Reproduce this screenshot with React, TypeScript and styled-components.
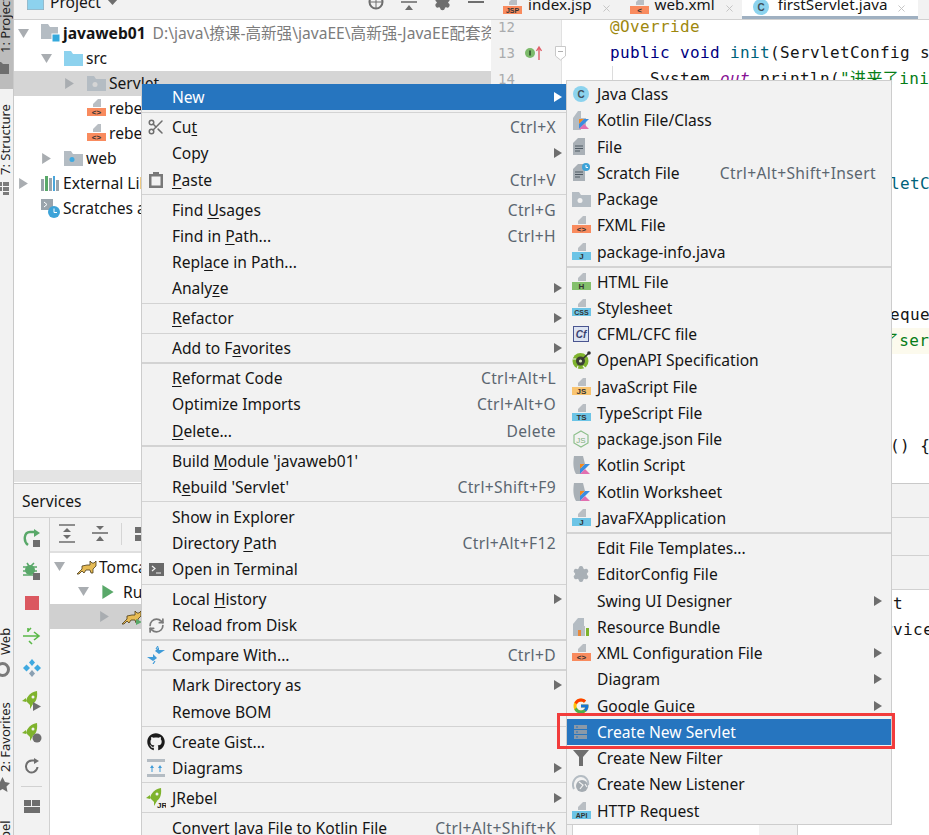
import React from "react";
import styled, { createGlobalStyle } from "styled-components";
import { Scissors, RefreshCw, Settings, X } from "lucide-react";
import { FaGithub } from "react-icons/fa";
import { FcGoogle } from "react-icons/fc";

const UI = `"Noto Sans", "Noto Sans CJK SC", sans-serif`;
const MONO = `"DejaVu Sans Mono", "Noto Sans CJK SC", monospace`;

const Global = createGlobalStyle`
  html, body { margin: 0; padding: 0; width: 929px; height: 835px; overflow: hidden; background: #f2f2f2; }
  #root { width: 929px; height: 835px; }
  * { box-sizing: border-box; }
  u { text-underline-offset: 2px; }
`;

const Window = styled.div`
  position: relative; display: flex; width: 929px; height: 835px; overflow: hidden;
  font: 15.6px/20px ${UI}; color: #151515; background: #f2f2f2;
`;

/* ---------- left tool stripe ---------- */
const Stripe = styled.aside`
  flex: 0 0 14px; height: 835px; overflow: hidden; display: flex; flex-direction: column;
  border-right: 1px solid #c9c9c9; background: #f2f2f2;
`;
const StripeGroup = styled.div<{ $top?: number; $h?: number; $on?: boolean }>`
  display: flex; flex-direction: column; flex: none; margin-top: ${p => p.$top ?? 0}px;
  height: ${p => (p.$h ? `${p.$h}px` : "auto")}; background: ${p => (p.$on ? "#bcbcbc" : "transparent")};
`;
const StripeText = styled.div<{ $h: number }>`
  writing-mode: vertical-rl; transform: rotate(180deg); height: ${p => p.$h}px; width: 13px; overflow: hidden;
  white-space: nowrap; font-size: 13px; line-height: 10px; display: flex; align-items: flex-start; color: #222;
  padding-left: 4px;
`;
const StripeIcon = styled.svg<{ $top: number }>`
  display: block; margin-top: ${p => p.$top}px; margin-left: -5px; flex: none;
`;

/* ---------- main ---------- */
const Main = styled.div`
  flex: 1; min-width: 0; display: flex; flex-direction: column;
`;
const TopRow = styled.div`
  flex: 0 0 484px; display: flex; border-bottom: 1px solid #c9c9c9; min-height: 0;
`;
const ProjectPanel = styled.section`
  flex: 0 0 477px; min-width: 0; overflow: hidden; display: flex; flex-direction: column; background: #fff;
`;
const PanelHeader = styled.header`
  flex: 0 0 20px; overflow: hidden; background: #f2f2f2; border-bottom: 1px solid #d1d1d1;
`;
const PanelHeaderInner = styled.div`
  height: 28px; margin-top: -12px; display: flex; align-items: center; padding: 0 7px 0 13px; gap: 6px;
`;
const HeaderSpacer = styled.div` flex: 1; `;
const HeaderTools = styled.div` display: flex; align-items: center; gap: 17px; `;
const Tree = styled.div`
  flex: 1; padding-top: 0.5px; overflow: hidden; min-height: 0;
`;
const Row = styled.div<{ $indent: number; $selected?: boolean; $selColor?: string }>`
  height: 25px; display: flex; align-items: center; white-space: nowrap; overflow: hidden;
  padding-left: ${p => p.$indent}px;
  background: ${p => (p.$selected ? p.$selColor ?? "#d5d5d5" : "transparent")};
`;
const ArrowSlot = styled.span`
  flex: 0 0 23px; display: flex; align-items: center;
`;
const IconSlot = styled.span`
  flex: 0 0 22px; display: flex; align-items: center;
`;
const Bold = styled.b` font-weight: 700; margin-right: 7px; `;
const Muted = styled.span` color: #7c7c7c; `;
const HScroll = styled.div`
  flex: 0 0 13px; background: #e4e4e4; border-bottom: 1px solid #fff;
`;

/* editor */
const Editor = styled.section`
  flex: 1; min-width: 0; display: flex; flex-direction: column; background: #fff;
`;
const TabBar = styled.nav`
  flex: 0 0 20px; display: flex; overflow: hidden; background: #f2f2f2; border-bottom: 1px solid #d1d1d1;
  padding-left: 1px; font-size: 15.2px;
`;
const Tab = styled.div<{ $active?: boolean }>`
  height: 19px; display: flex; align-items: flex-end; flex: none; white-space: nowrap;
  padding: 0 ${p => (p.$active ? "11px" : "7px")} ${p => (p.$active ? "2px" : "5px")} 11px;
  background: ${p => (p.$active ? "#fff" : "transparent")};
  border-bottom: ${p => (p.$active ? "3px solid #9fb0c1" : "0")};
`;
const TabIconSlot = styled.span`
  flex: 0 0 25px; align-self: flex-end; display: flex; margin-bottom: -1px;
`;
const TabLabel = styled.span` margin-right: 9px; `;
const EditorBody = styled.div`
  flex: 1; display: flex; min-height: 0; overflow: hidden; position: relative;
`;
const Gutter = styled.div`
  flex: 0 0 71px; background: #f2f2f2; border-right: 1px solid #e1e1e1;
  font: 14px/26.2px ${MONO}; color: #a9abad;
`;
const LineList = styled.div` margin-top: -6px; `;
const GutterLine = styled.div`
  height: 26.2px; display: flex; align-items: center; padding-left: 7px;
`;
const LineNo = styled.span` flex: 0 0 27px; `;
const FoldMark = styled.svg` margin-left: auto; margin-right: -5px; position: relative; z-index: 1; `;
const Code = styled.div`
  flex: 1; min-width: 0; font: 16px/26.2px ${MONO}; letter-spacing: 0.37px; color: #151515;
  white-space: pre; overflow: hidden;
`;
const CodeLine = styled.div<{ $pad?: number; $hl?: boolean; $guide?: boolean }>`
  height: 26.2px; padding-left: ${p => 48 + (p.$pad ?? 0)}px;
  background: ${p => (p.$hl ? "#fcfaed" : "transparent")};
  ${p => (p.$guide ? "background: linear-gradient(#dcdcdc,#dcdcdc) no-repeat 50px 0/1px 100%;" : "")}
`;
const Kw = styled.span` color: #000080; `;
const Fn = styled.span` color: #00627a; `;
const Ann = styled.span` color: #9e880d; `;
const Str = styled.span` color: #067d17; `;
const Fld = styled.span` color: #871094; font-style: italic; `;

/* services */
const Services = styled.section`
  flex: 1; min-height: 0; display: flex; flex-direction: column; background: #f2f2f2;
`;
const ServicesHeader = styled.header`
  flex: 0 0 34px; display: flex; align-items: center; padding: 0 0 0 8px; border-bottom: 1px solid #d1d1d1;
`;
const ServicesBody = styled.div` flex: 1; display: flex; min-height: 0; `;
const VToolbar = styled.div`
  flex: 0 0 36px; border-right: 1px solid #d1d1d1; padding-top: 3.75px; display: flex; flex-direction: column;
`;
const VBtn = styled.div`
  height: 32.5px; flex: none; display: flex; align-items: center; justify-content: center;
`;
const VSep = styled.div`
  height: 8.5px; flex: none; padding-top: 3.75px;
  &::after { content: ""; display: block; height: 1px; margin: 0 7px; background: #d1d1d1; }
`;
const TreeCol = styled.div`
  flex: 0 0 517px; min-width: 0; display: flex; flex-direction: column; background: #fff;
`;
const HToolbar = styled.div`
  flex: 0 0 35px; display: flex; align-items: center; background: #f2f2f2; border-bottom: 2px solid #dfdfdf;
  padding: 0 0 2px 9px; gap: 17px;
`;
const ToolSep = styled.span`
  flex: none; width: 1px; height: 22px; background: #d5d5d5; margin: 0 -4px;
`;
const ServiceTree = styled.div` flex: 1; padding-top: 1px; overflow: hidden; `;
const Splitter = styled.div` flex: 0 0 5px; background: #f2f2f2; `;
const RightCol = styled.div`
  flex: 1; min-width: 0; display: flex; flex-direction: column; border-left: 1px solid #d1d1d1;
`;
const RightBar = styled.div<{ $h: number }>`
  flex: 0 0 ${p => p.$h}px; background: #f2f2f2; border-bottom: 1px solid #d1d1d1;
`;
const ConsoleRow = styled.div` flex: 1; display: flex; min-height: 0; `;
const ConsoleLeft = styled.div` flex: 0 0 186px; background: #fff; `;
const ConsoleGutter = styled.div` flex: 0 0 39px; background: #f2f2f2; border-right: 1px solid #d1d1d1; `;
const ConsoleOut = styled.div`
  flex: 1; background: #fff; padding: 0.5px 0 0 16px; font: 16px/26.2px ${MONO}; letter-spacing: 0.37px;
  white-space: nowrap; overflow: hidden;
`;

/* menus */
const Menu = styled.div<{ $left: number; $top: number; $width: number; $z: number }>`
  position: absolute; left: ${p => p.$left}px; top: ${p => p.$top}px; width: ${p => p.$width}px; z-index: ${p => p.$z};
  background: #f2f2f2; border: 1px solid #cdcdcd; border-width: ${p => (p.$z === 2 ? "1px" : "0 1px")};
`;
const MenuRow = styled.div<{ $active?: boolean; $sub?: boolean }>`
  height: ${p => (p.$sub ? "26.25px" : "26.2px")}; display: flex; align-items: center; padding-left: 30px;
  position: relative; white-space: nowrap;
  background: ${p => (p.$active ? "#2675bf" : "transparent")};
  color: ${p => (p.$active ? "#fff" : "#151515")};
`;
const MenuIcon = styled.span`
  position: absolute; left: 4px; top: 50%; transform: translateY(-50%); width: 20px; height: 20px;
  display: flex; align-items: center; justify-content: center;
`;
const Shortcut = styled.span<{ $sub?: boolean }>`
  margin-left: auto; margin-right: ${p => (p.$sub ? "15px" : "10px")}; color: #5b6670; letter-spacing: 0.35px;
`;
const SubArrow = styled.svg<{ $sub?: boolean }>`
  margin-left: auto; margin-right: ${p => (p.$sub ? "9px" : "4px")};
`;
const Sep = styled.div<{ $thick?: boolean }>`
  height: 3.85px; display: flex; align-items: center;
  &::after { content: ""; flex: 1; height: ${p => (p.$thick ? "2px" : "1px")}; background: #d3d3d3; }
`;
const Callout = styled.div`
  position: absolute; left: 557px; top: 713px; width: 338px; height: 36px; border: 3px solid #f23c3c; z-index: 3;
  pointer-events: none;
`;

/* ---------- icons ---------- */
const Tri = ({ dir = "r", c = "#a9adb1", s = 11 }: { dir?: "r" | "d"; c?: string; s?: number }) => (
  <svg width={s} height={s} viewBox="0 0 10 10">
    <path d={dir === "r" ? "M1 0 L9 5 L1 10Z" : "M0 1 H10 L5 9Z"} fill={c} />
  </svg>
);
const Folder = ({ c = "#8dd2ee", dot }: { c?: string; dot?: string }) => (
  <svg width="19" height="15" viewBox="0 0 19 15">
    <path d="M0 0 H7 L9 3 H19 V15 H0Z" fill={c} />
    {dot && <circle cx="8" cy="8.5" r="2.5" fill={dot} />}
  </svg>
);
const ModuleIcon = () => (
  <svg width="20" height="18" viewBox="0 0 20 18">
    <path d="M0 0 H7 L9 3 H17 V15 H0Z" fill="#b4bcc3" />
    <rect x="11" y="10" width="8" height="8" fill="#35a9dc" stroke="#fff" />
  </svg>
);
const FileBand = ({ band, label, tc = "#333" }: { band: string; label: string; tc?: string }) => (
  <svg width="19" height="18" viewBox="0 0 19 18">
    <path d="M6 5 L11 0 H14 V8 H6Z" fill="#b9bec3" />
    <rect x="0" y="9" width="19" height="8" fill={band} />
    <text x="9.5" y="15.8" fontSize={label.length > 2 ? 7 : 8} fontWeight="700" textAnchor="middle" fontFamily='"Liberation Sans", sans-serif' fill={tc}>{label}</text>
  </svg>
);
const Kt = ({ x = 7, y = 7 }: { x?: number; y?: number }) => (
  <g transform={`translate(${x} ${y})`}>
    <path d="M0 0 H5 L0 5Z" fill="#f58a1f" />
    <path d="M5 0 H10 L0 10 V5Z" fill="#3b8de0" />
    <path d="M0 10 L5 5 L10 10Z" fill="#e26fb0" />
  </g>
);
const KotlinFile = () => (
  <svg width="18" height="20" viewBox="0 0 18 20">
    <path d="M1 8 L6 1 H9 V8 H14 V9 H9 V20 H1Z" fill="#b4bcc3" />
    <path d="M6 9 H14 V19 H6Z" fill="#b4bcc3" />
    <Kt x={7} y={9} />
  </svg>
);
const KotlinScript = () => (
  <svg width="18" height="20" viewBox="0 0 18 20">
    <path d="M2 1 H11 L13 9 H9 V19 H4 C1 14 1 7 2 1Z" fill="#a9b0b6" />
    <Kt x={8} y={9} />
  </svg>
);
const DocLines = ({ clock }: { clock?: boolean }) => (
  <svg width="18" height="19" viewBox="0 0 18 19">
    <path d="M1 6 L6 1 H13 V18 H1Z" fill="#a9b0b6" />
    <path d="M3 9 H11 M3 11.5 H11 M3 14 H8" stroke="#4f5a63" strokeWidth="1" />
    {clock && <><circle cx="14" cy="4" r="4" fill="#3da3d8" /><path d="M14 2 V4.5 H16" stroke="#fff" fill="none" /></>}
  </svg>
);
const JavaC = ({ s = 16 }: { s?: number }) => (
  <svg width={s} height={s} viewBox="0 0 16 16">
    <circle cx="8" cy="8" r="8" fill="#8cd3ee" />
    <text x="8" y="11.5" fontSize="10" fontWeight="700" textAnchor="middle" fontFamily='"Liberation Sans", sans-serif' fill="#3f4f5a">C</text>
  </svg>
);
const Cfml = () => (
  <svg width="16" height="16" viewBox="0 0 16 16">
    <rect x="0.5" y="0.5" width="15" height="15" fill="#dde4f2" stroke="#4a5590" />
    <text x="8" y="12" fontSize="10" fontWeight="700" fontStyle="italic" textAnchor="middle" fontFamily='"Liberation Sans", sans-serif' fill="#3a4270">Cf</text>
  </svg>
);
const OpenApi = () => (
  <svg width="19" height="19" viewBox="0 0 19 19">
    <circle cx="8.5" cy="10" r="8" fill="#7fb32d" />
    <circle cx="8.5" cy="10" r="4.5" fill="#3c3f35" />
    <path d="M8.5 10 L17 2" stroke="#333" strokeWidth="1.5" />
    <circle cx="17" cy="2" r="1.8" fill="#333" />
    <circle cx="8.5" cy="10" r="1.6" fill="#d9e8b8" />
    <path d="M1 8 H4 M6 15 L5 18 M11 15 L13 17" stroke="#f2f2f2" strokeWidth="1.2" />
  </svg>
);
const NodeJs = () => (
  <svg width="16" height="18" viewBox="0 0 16 18">
    <path d="M8 1 L15 5 V13 L8 17 L1 13 V5Z" fill="none" stroke="#8dbf8b" strokeWidth="1.2" />
    <text x="8" y="12.5" fontSize="8" textAnchor="middle" fontFamily='"Liberation Sans", sans-serif' fill="#7fb07d">JS</text>
  </svg>
);
const BundleIcon = () => (
  <svg width="18" height="20" viewBox="0 0 18 20">
    <path d="M1 7 L6 1 H12 V19 H1Z" fill="#b4bcc3" />
    <rect x="6" y="13" width="3" height="6" fill="#e8883a" />
    <rect x="10" y="9" width="3" height="10" fill="#b9bec3" />
    <rect x="14" y="11" width="3" height="8" fill="#7fb32d" />
  </svg>
);
const ServletIcon = () => (
  <svg width="16" height="16" viewBox="0 0 16 16">
    <rect x="1" y="1" width="13" height="4" fill="#8a99a8" />
    <rect x="1" y="6" width="13" height="4" fill="#8a99a8" />
    <rect x="1" y="11" width="13" height="4" fill="#8a99a8" />
    <path d="M3 3 H5 M3 8 H5 M3 13 H5" stroke="#2675bf" />
  </svg>
);
const FilterIcon = () => (
  <svg width="16" height="18" viewBox="0 0 16 18"><path d="M0 1 H16 L10 8 V17 H6 V8Z" fill="#6e6e6e" /></svg>
);
const ListenerIcon = () => (
  <svg width="18" height="18" viewBox="0 0 18 18">
    <path d="M2 14 C-1 8 3 1 9 1 C14 1 17 6 16 10" fill="none" stroke="#b4bcc3" strokeWidth="2" />
    <circle cx="10" cy="11" r="6" fill="#a4abb1" />
    <path d="M7 7 L11 10 L8 14 M13 9 L15 12" stroke="#f2f2f2" strokeWidth="1.2" fill="none" />
  </svg>
);
const ClipboardIcon = () => (
  <svg width="16" height="18" viewBox="0 0 16 18">
    <path d="M1 3 H15 V17 H1Z M3.5 5.5 V14.5 H12.5 V5.5Z" fill="#787878" fillRule="evenodd" />
    <rect x="5" y="1" width="6" height="3.5" fill="#787878" />
  </svg>
);
const TerminalIcon = () => (
  <svg width="15" height="13" viewBox="0 0 15 13">
    <rect width="15" height="13" fill="#696969" />
    <path d="M3 3 L6 5.5 L3 8 M7 10 H12" stroke="#f2f2f2" strokeWidth="1.2" fill="none" />
  </svg>
);
const CompareIcon = () => (
  <svg width="18" height="18" viewBox="0 0 18 18">
    <path d="M0 11 H6 V8 L10 12 L6 15 Z" fill="#3f9bd8" />
    <path d="M18 4 H12 V1 L8 5 L12 8Z" fill="#3f9bd8" />
    <path d="M11 0 L9 3 M8 15 L6 18" stroke="#3f9bd8" strokeWidth="1.2" />
  </svg>
);
const DiagramIcon = () => (
  <svg width="18" height="18" viewBox="0 0 18 18">
    <rect y="0" width="18" height="3" fill="#b4bcc3" />
    <rect y="15" width="18" height="3" fill="#b4bcc3" />
    <path d="M5 6 L7 9 H3Z M13 6 L15 9 H11Z" fill="#3f9bd8" />
    <path d="M5 9 V13 M13 9 V13" stroke="#3f9bd8" />
  </svg>
);
const Rocket = ({ children }: { children?: React.ReactNode }) => (
  <svg width="20" height="20" viewBox="0 0 20 20">
    <path d="M15 0 C9 1 5 5 4 10 L8 14 C13 13 16 8 15 0Z" fill="#7fb32d" />
    <path d="M4 7 L0 10 L4 11Z M8 13 L8 18 L11 13Z" fill="#7fb32d" />
    <circle cx="11" cy="6" r="1.5" fill="#f2f2f2" />
    {children}
  </svg>
);
const Rerun = () => (
  <svg width="18" height="18" viewBox="0 0 18 18">
    <path d="M12 3 H7 C1 3 0 12 5 16" fill="none" stroke="#59a869" strokeWidth="2.4" />
    <path d="M11 0 L17 4 L11 8Z" fill="#59a869" />
    <rect x="10" y="11" width="7" height="7" fill="#6e6e6e" />
  </svg>
);
const BugRerun = () => (
  <svg width="18" height="18" viewBox="0 0 18 18">
    <circle cx="7" cy="8" r="5" fill="#59a869" />
    <path d="M0 5 H14 M0 9 H14 M0 13 H14 M4 1 L6 4 M11 1 L8 4" stroke="#59a869" strokeWidth="1.6" />
    <rect x="10" y="11" width="7" height="7" fill="#6e6e6e" />
  </svg>
);
const Deploy = () => (
  <svg width="18" height="18" viewBox="0 0 18 18">
    <path d="M0 9 H15 M11 5 L16 9 L11 13 M8 1 L5 4 M5 1 V5 M9 17 L6 14" stroke="#5ab848" strokeWidth="1.6" fill="none" />
  </svg>
);
const Diamonds = () => (
  <svg width="18" height="18" viewBox="0 0 18 18">
    <path d="M9 0 L12 3.5 L9 7 L6 3.5Z" fill="#3fa9e0" />
    <path d="M3.5 5.5 L7 9 L3.5 12.5 L0 9Z" fill="#3fa9e0" />
    <path d="M14.5 5.5 L18 9 L14.5 12.5 L11 9Z" fill="#3fa9e0" />
    <path d="M9 11 L12 14.5 L9 18 L6 14.5Z" fill="#8aa0b2" />
  </svg>
);
const Refresh = () => (
  <svg width="16" height="16" viewBox="0 0 16 16">
    <path d="M11 2.5 H8 C2 2.5 0 10 4.5 13.5 C8 16 13 13.5 13.5 9" fill="none" stroke="#6e6e6e" strokeWidth="2" />
    <path d="M10 0 L15 3 L10 6Z" fill="#6e6e6e" />
  </svg>
);
const LayoutIcon = () => (
  <svg width="16" height="13" viewBox="0 0 16 13" fill="#6e6e6e">
    <rect width="7" height="6" /><rect x="8" width="8" height="6" /><rect y="7" width="16" height="6" />
  </svg>
);
const ExpandAll = ({ collapse }: { collapse?: boolean }) => (
  <svg width="16" height="19" viewBox="0 0 16 19">
    <path d={collapse ? "M0 9 H16" : "M0 1 H16 M0 18 H16"} stroke="#6e6e6e" strokeWidth="1.6" />
    <path d={collapse ? "M8 6 L4 2 H12Z M8 12 L4 17 H12Z" : "M8 4 L4 8 H12Z M8 15 L4 11 H12Z"} fill="#6e6e6e" />
  </svg>
);
const Tomcat = ({ run }: { run?: boolean }) => (
  <svg width="20" height="16" viewBox="0 0 20 16">
    <path d="M0 15 L5 10 L5 7 L10 6 L13 6 L13 2 L15 4 L17 4 L19 2 L19 7 L16 10 L16 14 L14 14 L13 11 L9 11 L7 14 L5 12 L2 15Z" fill="#e6bb55" stroke="#4a3a18" strokeWidth=".8" />
    {run && <path d="M14 10 L20 13 L14 16Z" fill="#59a869" />}
  </svg>
);
const Libs = () => (
  <svg width="18" height="15" viewBox="0 0 18 15">
    <rect x="0" y="3" width="3" height="12" fill="#9aa4ac" /><rect x="4" y="0" width="3" height="15" fill="#59a869" />
    <rect x="8" y="2" width="3" height="13" fill="#9aa4ac" /><rect x="12" y="0" width="2" height="15" fill="#4aa5da" /><rect x="15" y="4" width="3" height="11" fill="#9aa4ac" />
  </svg>
);
const Scratches = () => (
  <svg width="19" height="19" viewBox="0 0 19 19">
    <path d="M0 0 H12 V11 H0Z" fill="#9aa4ac" />
    <path d="M3 3 L6 5.5 L3 8" stroke="#fff" fill="none" />
    <circle cx="13" cy="13" r="6" fill="#3da3d8" />
    <path d="M13 9.5 V13.5 H16" stroke="#fff" fill="none" />
  </svg>
);
const Close = () => <X size={11} color="#c2c2c2" strokeWidth={2} />;
const Right = ({ active, sub }: { active?: boolean; sub?: boolean }) => (
  <SubArrow $sub={sub} width="8" height="10" viewBox="0 0 8 10">
    <path d="M0 0 L8 5 L0 10Z" fill={active ? "#fff" : "#6e6e6e"} />
  </SubArrow>
);

/* ---------- menu data ---------- */
type Item = { label: React.ReactNode; icon?: React.ReactNode; keys?: string; more?: boolean; active?: boolean } | { sep: true; thick?: boolean };

const mainMenu: Item[] = [
  { label: "New", more: true, active: true },
  { sep: true },
  { label: <>Cu<u>t</u></>, keys: "Ctrl+X", icon: <Scissors size={18} color="#6e6e6e" strokeWidth={2} /> },
  { label: "Copy", more: true },
  { label: <><u>P</u>aste</>, keys: "Ctrl+V", icon: <ClipboardIcon /> },
  { sep: true },
  { label: <>Find <u>U</u>sages</>, keys: "Ctrl+G" },
  { label: <>Find in <u>P</u>ath...</>, keys: "Ctrl+H" },
  { label: <>Repl<u>a</u>ce in Path...</> },
  { label: <>Analy<u>z</u>e</>, more: true },
  { sep: true },
  { label: <><u>R</u>efactor</>, more: true },
  { sep: true },
  { label: <>Add to F<u>a</u>vorites</>, more: true },
  { sep: true, thick: true },
  { label: <><u>R</u>eformat Code</>, keys: "Ctrl+Alt+L" },
  { label: "Optimize Imports", keys: "Ctrl+Alt+O" },
  { label: <><u>D</u>elete...</>, keys: "Delete" },
  { sep: true, thick: true },
  { label: <>Build <u>M</u>odule 'javaweb01'</> },
  { label: <>R<u>e</u>build 'Servlet'</>, keys: "Ctrl+Shift+F9" },
  { sep: true },
  { label: "Show in Explorer" },
  { label: <>Directory <u>P</u>ath</>, keys: "Ctrl+Alt+F12" },
  { label: "Open in Terminal", icon: <TerminalIcon /> },
  { sep: true },
  { label: <>Local <u>H</u>istory</>, more: true },
  { label: "Reload from Disk", icon: <RefreshCw size={17} color="#7a7a7a" strokeWidth={2.4} /> },
  { sep: true, thick: true },
  { label: "Compare With...", keys: "Ctrl+D", icon: <CompareIcon /> },
  { sep: true, thick: true },
  { label: "Mark Directory as", more: true },
  { label: "Remove BOM" },
  { sep: true },
  { label: "Create Gist...", icon: <FaGithub size={18} color="#1b1b1b" /> },
  { label: "Diagrams", more: true, icon: <DiagramIcon /> },
  { sep: true },
  { label: "JRebel", more: true, icon: <Rocket><text x="11" y="20" fontSize="8" fontWeight="700" fontFamily='"Liberation Sans", sans-serif' fill="#222">JR</text></Rocket> },
  { sep: true },
  { label: "Convert Java File to Kotlin File", keys: "Ctrl+Alt+Shift+K" },
];

const subMenu: Item[] = [
  { label: "Java Class", icon: <JavaC /> },
  { label: "Kotlin File/Class", icon: <KotlinFile /> },
  { label: "File", icon: <DocLines /> },
  { label: "Scratch File", keys: "Ctrl+Alt+Shift+Insert", icon: <DocLines clock /> },
  { label: "Package", icon: <Folder c="#b4bcc3" dot="#f2f2f2" /> },
  { label: "FXML File", icon: <FileBand band="#f98b5e" label="<>" /> },
  { label: "package-info.java", icon: <FileBand band="#6cc4e6" label="J" /> },
  { sep: true, thick: true },
  { label: "HTML File", icon: <FileBand band="#84c06c" label="H" /> },
  { label: "Stylesheet", icon: <FileBand band="#6cc4e6" label="CSS" /> },
  { label: "CFML/CFC file", icon: <Cfml /> },
  { label: "OpenAPI Specification", icon: <OpenApi /> },
  { label: "JavaScript File", icon: <FileBand band="#f9c470" label="JS" /> },
  { label: "TypeScript File", icon: <FileBand band="#6cc4e6" label="TS" /> },
  { label: "package.json File", icon: <NodeJs /> },
  { label: "Kotlin Script", icon: <KotlinScript /> },
  { label: "Kotlin Worksheet", icon: <KotlinScript /> },
  { label: "JavaFXApplication", icon: <FileBand band="#6cc4e6" label="J" /> },
  { sep: true, thick: true },
  { label: "Edit File Templates..." },
  { label: "EditorConfig File", icon: <Settings size={18} color="#a9b0b6" fill="#a9b0b6" strokeWidth={1.5} /> },
  { label: "Swing UI Designer", more: true },
  { label: "Resource Bundle", icon: <BundleIcon /> },
  { label: "XML Configuration File", more: true, icon: <FileBand band="#f98b5e" label="<>" /> },
  { label: "Diagram", more: true },
  { label: "Google Guice", more: true, icon: <FcGoogle size={18} /> },
  { label: "Create New Servlet", active: true, icon: <ServletIcon /> },
  { label: "Create New Filter", icon: <FilterIcon /> },
  { label: "Create New Listener", icon: <ListenerIcon /> },
  { label: "HTTP Request", icon: <FileBand band="#6cc4e6" label="API" /> },
];

const MenuList = ({ items, sub }: { items: Item[]; sub?: boolean }) => (
  <>
    {items.map((it, i) =>
      "sep" in it ? (
        <Sep key={i} $thick={it.thick} />
      ) : (
        <MenuRow key={i} $active={it.active} $sub={sub}>
          {it.icon && <MenuIcon>{it.icon}</MenuIcon>}
          <span>{it.label}</span>
          {it.keys && <Shortcut $sub={sub}>{it.keys}</Shortcut>}
          {it.more && <Right active={it.active} sub={sub} />}
        </MenuRow>
      ),
    )}
  </>
);

export default function App() {
  return (
    <Window>
      <Global />
      <Stripe>
        <StripeGroup $on $h={89}>
          <StripeText $h={53}><span><u>1</u>: Project</span></StripeText>
          <StripeIcon $top={9} width="14" height="12" viewBox="0 0 14 12"><path d="M0 0 H6 L8 2 H14 V12 H0Z" fill="#6e6e6e" /></StripeIcon>
        </StripeGroup>
        <StripeGroup $top={13}>
          <StripeText $h={73}><span><u>7</u>: Structure</span></StripeText>
          <StripeIcon $top={7} width="14" height="13" viewBox="0 0 14 13"><path d="M0 0 H7 V4 H0Z M8 0 H14 V4 H8Z M0 5 H7 V9 H0Z M8 5 H14 V9 H8Z M8 10 H14 V13 H8Z" fill="#7a7a7a" /></StripeIcon>
        </StripeGroup>
        <StripeGroup $top={433}>
          <StripeText $h={27}><span>Web</span></StripeText>
          <StripeIcon $top={7} width="15" height="15" viewBox="0 0 15 15"><circle cx="7.5" cy="7.5" r="6" fill="none" stroke="#7a7a7a" strokeWidth="3" /></StripeIcon>
        </StripeGroup>
        <StripeGroup $top={24}>
          <StripeText $h={71}><span><u>2</u>: Favorites</span></StripeText>
          <StripeIcon $top={5} width="15" height="15" viewBox="0 0 15 15"><path d="M7.5 0 L10 5 L15 6 L11.5 9.5 L12.5 15 L7.5 12 L2.5 15 L3.5 9.5 L0 6 L5 5Z" fill="#6e6e6e" /></StripeIcon>
        </StripeGroup>
        <StripeGroup $top={26}>
          <StripeText $h={40}><span>JRebel</span></StripeText>
        </StripeGroup>
      </Stripe>

      <Main>
        <TopRow>
          <ProjectPanel>
            <PanelHeader>
              <PanelHeaderInner>
                <svg width="17" height="15" viewBox="0 0 17 15"><rect width="17" height="15" fill="#8dd2ee" stroke="#9aa4ac" /></svg>
                <span>Project</span>
                <svg width="11" height="6" viewBox="0 0 11 6"><path d="M0 0 H11 L5.5 6Z" fill="#6e6e6e" /></svg>
                <HeaderSpacer />
                <HeaderTools>
                  <svg width="16" height="16" viewBox="0 0 16 16"><circle cx="8" cy="8" r="6.5" fill="none" stroke="#6e6e6e" strokeWidth="2" /><path d="M8 1 V15 M1 8 H15" stroke="#6e6e6e" /></svg>
                  <ExpandAll collapse />
                  <Settings size={17} color="#6e6e6e" fill="#6e6e6e" />
                  <svg width="16" height="2" viewBox="0 0 16 2"><rect width="16" height="2" fill="#6e6e6e" /></svg>
                </HeaderTools>
              </PanelHeaderInner>
            </PanelHeader>
            <Tree>
              <Row $indent={4}>
                <ArrowSlot><Tri dir="d" /></ArrowSlot><IconSlot><ModuleIcon /></IconSlot>
                <Bold>javaweb01</Bold><Muted>D:\java\撩课-高新强\javaEE\高新强-JavaEE配套资料</Muted>
              </Row>
              <Row $indent={27}>
                <ArrowSlot><Tri dir="d" /></ArrowSlot><IconSlot><Folder /></IconSlot><span>src</span>
              </Row>
              <Row $indent={50} $selected>
                <ArrowSlot><Tri /></ArrowSlot><IconSlot><Folder c="#b4bcc3" dot="#d5d5d5" /></IconSlot><span>Servlet</span>
              </Row>
              <Row $indent={50}>
                <ArrowSlot /><IconSlot><FileBand band="#f98b5e" label="<>" /></IconSlot><span>rebel.xml</span>
              </Row>
              <Row $indent={50}>
                <ArrowSlot /><IconSlot><FileBand band="#f98b5e" label="<>" /></IconSlot><span>rebel-remote.xml</span>
              </Row>
              <Row $indent={27}>
                <ArrowSlot><Tri /></ArrowSlot><IconSlot><Folder c="#b4bcc3" dot="#3fa9e0" /></IconSlot><span>web</span>
              </Row>
              <Row $indent={4}>
                <ArrowSlot><Tri /></ArrowSlot><IconSlot><Libs /></IconSlot><span>External Libraries</span>
              </Row>
              <Row $indent={27}>
                <IconSlot><Scratches /></IconSlot><span>Scratches and Consoles</span>
              </Row>
            </Tree>
            <HScroll />
          </ProjectPanel>

          <Editor>
            <TabBar>
              <Tab>
                <TabIconSlot><FileBand band="#f98b5e" label="JSP" /></TabIconSlot>
                <TabLabel>index.jsp</TabLabel><Close />
              </Tab>
              <Tab>
                <TabIconSlot><FileBand band="#f98b5e" label="<" /></TabIconSlot>
                <TabLabel>web.xml</TabLabel><Close />
              </Tab>
              <Tab $active>
                <TabIconSlot><JavaC /></TabIconSlot>
                <TabLabel>firstServlet.java</TabLabel><Close />
              </Tab>
            </TabBar>
            <EditorBody>
              <Gutter>
                <LineList>
                  <GutterLine><LineNo>12</LineNo></GutterLine>
                  <GutterLine>
                    <LineNo>13</LineNo>
                    <svg width="17" height="16" viewBox="0 0 17 16">
                      <circle cx="5" cy="8" r="5" fill="#7cba6a" />
                      <path d="M5 5.5 V10.5" stroke="#2f4f2a" strokeWidth="1.6" />
                      <path d="M14 15 V3 M11.5 6 L14 2 L16.5 6" stroke="#e0606a" strokeWidth="1.4" fill="none" />
                    </svg>
                    <FoldMark width="11" height="15" viewBox="0 0 11 15">
                      <path d="M0.5 0.5 H10.5 V10 L5.5 14 L0.5 10Z" fill="#fff" stroke="#c9c9c9" />
                      <path d="M3 5.5 H8" stroke="#b0b0b0" />
                    </FoldMark>
                  </GutterLine>
                  {[14, 15, 16, 17, 18, 19, 20, 21, 22, 23].map(n => (
                    <GutterLine key={n}><LineNo>{n}</LineNo></GutterLine>
                  ))}
                </LineList>
              </Gutter>
              <Code>
                <LineList>
                  <CodeLine><Ann>@Override</Ann></CodeLine>
                  <CodeLine><Kw>public void</Kw> <Fn>init</Fn>(ServletConfig servletConfig) {"{"}</CodeLine>
                  <CodeLine $pad={40} $guide>System.<Fld>out</Fld>.println(<Str>"进来了init"</Str>);</CodeLine>
                  <CodeLine />
                  <CodeLine />
                  <CodeLine />
                  <CodeLine><Kw>public</Kw> ServletConfig <Fn>getServletConfig</Fn>() {"{"}</CodeLine>
                  <CodeLine />
                  <CodeLine />
                  <CodeLine />
                  <CodeLine />
                  <CodeLine><Kw>public void</Kw> <Fn>service</Fn>(ServletRequest servletRequest) {"{"}</CodeLine>
                  <CodeLine $pad={40} $hl>System.<Fld>out</Fld>.println(<Str>"进来了service"</Str>);</CodeLine>
                  <CodeLine />
                  <CodeLine />
                  <CodeLine />
                  <CodeLine><Kw>public</Kw> String <Fn>getServletInfo</Fn>() {"{"}</CodeLine>
                </LineList>
              </Code>
            </EditorBody>
          </Editor>
        </TopRow>

        <Services>
          <ServicesHeader>Services</ServicesHeader>
          <ServicesBody>
            <VToolbar>
              <VBtn><Rerun /></VBtn>
              <VBtn><BugRerun /></VBtn>
              <VBtn><svg width="14" height="14" viewBox="0 0 14 14"><rect width="14" height="14" fill="#db5860" /></svg></VBtn>
              <VBtn><Deploy /></VBtn>
              <VBtn><Diamonds /></VBtn>
              <VBtn><Rocket><path d="M11 11 L19 15.5 L11 20Z" fill="#6e6e6e" /></Rocket></VBtn>
              <VBtn><Rocket><circle cx="15" cy="15" r="4.5" fill="#6e6e6e" /></Rocket></VBtn>
              <VBtn><Refresh /></VBtn>
              <VSep />
              <VBtn><LayoutIcon /></VBtn>
            </VToolbar>
            <TreeCol>
              <HToolbar>
                <ExpandAll />
                <ExpandAll collapse />
                <ToolSep />
                <svg width="16" height="16" viewBox="0 0 16 16" fill="#6e6e6e"><rect y="1" width="6" height="6" /><rect y="9" width="6" height="6" /><rect x="9" y="1" width="6" height="6" /></svg>
              </HToolbar>
              <ServiceTree>
                <Row $indent={4}>
                  <ArrowSlot><Tri dir="d" /></ArrowSlot><IconSlot><Tomcat /></IconSlot><span>Tomcat Server</span>
                </Row>
                <Row $indent={28}>
                  <ArrowSlot><Tri dir="d" /></ArrowSlot><IconSlot><Tri c="#59a869" s={14} /></IconSlot><span>Running</span>
                </Row>
                <Row $indent={49} $selected $selColor="#d0d0d0">
                  <ArrowSlot><Tri /></ArrowSlot><IconSlot><Tomcat run /></IconSlot><span>Tomcat 8.5</span>
                </Row>
              </ServiceTree>
            </TreeCol>
            <Splitter />
            <RightCol>
              <RightBar $h={38} />
              <RightBar $h={34} />
              <ConsoleRow>
                <ConsoleLeft />
                <ConsoleGutter />
                <ConsoleOut>
                  <div>进来了init</div>
                  <div>进来了service</div>
                </ConsoleOut>
              </ConsoleRow>
            </RightCol>
          </ServicesBody>
        </Services>
      </Main>

      <Menu $left={141} $top={84} $width={426} $z={1}><MenuList items={mainMenu} /></Menu>
      <Menu $left={566} $top={80} $width={326} $z={2}><MenuList items={subMenu} sub /></Menu>
      <Callout />
    </Window>
  );
}
